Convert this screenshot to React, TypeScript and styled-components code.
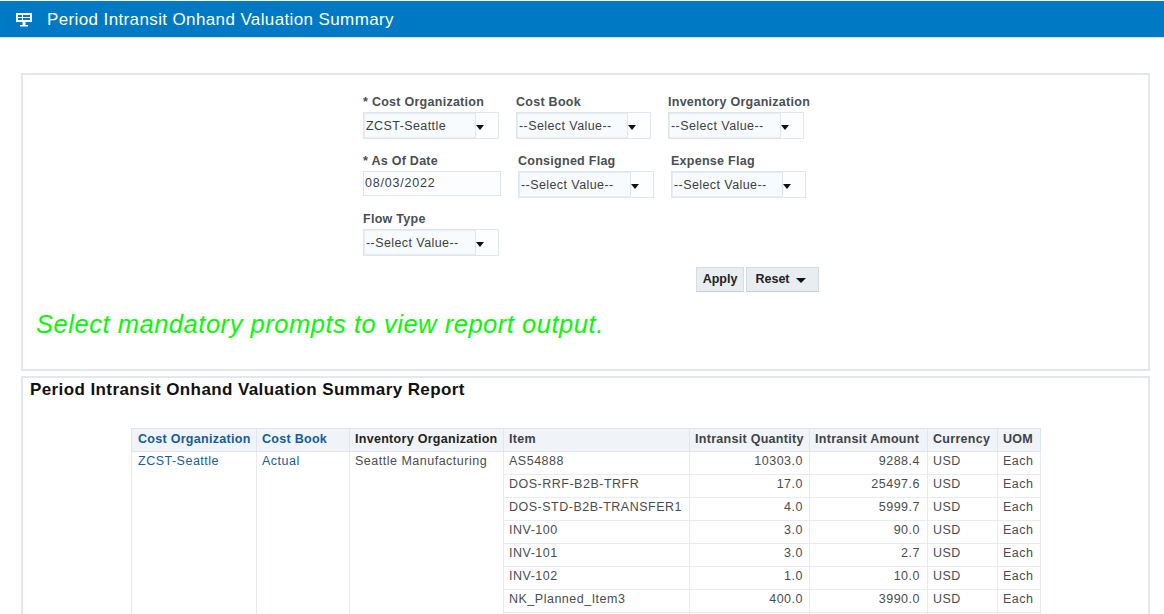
import React from "react";
import styled, { createGlobalStyle } from "styled-components";

const GlobalStyle = createGlobalStyle`
  html, body {
    margin: 0;
    padding: 0;
    height: 100%;
    overflow: hidden;
    background: #fff;
    font-family: "Liberation Sans", Arial, sans-serif;
  }
`;

const Page = styled.div`
  width: 1164px;
  height: 614px;
  overflow: hidden;
  display: flex;
  flex-direction: column;
`;

const Header = styled.header`
  margin-top: 1px;
  height: 36px;
  flex: none;
  background: #0079c5;
  border-bottom: 1px solid #cfe2f0;
  display: flex;
  align-items: center;
  padding-left: 15px;
  gap: 12px;
  color: #fff;
`;

const HeaderTitle = styled.h1`
  margin: 0;
  padding-top: 2px;
  font-size: 17px;
  font-weight: normal;
  letter-spacing: 0.38px;
`;

const Panel = styled.section<{ $height: number }>`
  box-sizing: border-box;
  margin: 0 14px 0 21px;
  height: ${(p) => p.$height}px;
  flex: none;
  border: 2px solid #e3e8f0;
  background: #fff;
`;

const PromptPanel = styled(Panel)`
  margin-top: 35px;
  padding: 20px 0 0 13px;
  margin-bottom: 5px;
`;

const PromptRow = styled.div`
  display: flex;
  gap: 17px;
  margin-left: 327px;
  height: 58.5px;
`;

const Prompt = styled.div`
  display: flex;
  flex-direction: column;
`;

const PromptLabel = styled.label`
  font-size: 12.5px;
  font-weight: bold;
  color: #4a4f52;
  line-height: 15px;
  height: 17px;
  letter-spacing: 0.27px;
  white-space: nowrap;
`;

const SelectBox = styled.div<{ $width: number }>`
  box-sizing: border-box;
  width: ${(p) => p.$width}px;
  height: 27px;
  border: 1px solid #dfe6ec;
  display: flex;
  background: #fdfeff;
`;

const SelectValue = styled.div`
  box-sizing: border-box;
  flex: 1;
  border: 1px solid #e6ecf2;
  border-right-color: #dfe6ec;
  background: #f8fbfe;
  font-size: 12.5px;
  line-height: 24px;
  padding-left: 1px;
  color: #3c3f41;
  white-space: nowrap;
  letter-spacing: 0.42px;
`;

const SelectArrow = styled.div`
  flex: none;
  width: 22px;
  display: flex;
  align-items: center;
  justify-content: flex-start;
  padding-top: 4px;
  box-sizing: border-box;
  &::after {
    content: "";
    border-left: 4.5px solid transparent;
    border-right: 4.5px solid transparent;
    border-top: 5px solid #111;
  }
`;

const DateBox = styled.div`
  box-sizing: border-box;
  width: 138px;
  height: 25px;
  border: 1px solid #dfe6ec;
  background: #fbfdfe;
  font-size: 12.5px;
  line-height: 22px;
  padding-left: 1px;
  color: #3c3f41;
  letter-spacing: 0.8px;
`;

const Actions = styled.div`
  display: flex;
  gap: 2px;
  margin: -4px 0 0 660px;
`;

const ActionButton = styled.button`
  box-sizing: border-box;
  height: 25px;
  width: 48px;
  padding: 0 6px;
  display: flex;
  align-items: center;
  justify-content: center;
  gap: 5px;
  border: 1px solid #d6dde3;
  border-bottom-color: #c6ced5;
  background: #e8edf2;
  font-family: inherit;
  font-size: 12.5px;
  font-weight: bold;
  color: #222;
  &[value="menu"] {
    width: 73px;
    gap: 6px;
    padding-right: 10px;
  }
  &[value="menu"]::after {
    content: "";
    border-left: 5px solid transparent;
    border-right: 5px solid transparent;
    border-top: 5px solid #111;
    margin-top: 2px;
  }
`;

const Notice = styled.p`
  margin: 19px 0 0 0;
  font-size: 25.5px;
  font-style: italic;
  line-height: 26px;
  color: #08f808;
  letter-spacing: 0.53px;
  white-space: nowrap;
`;

const ReportTitle = styled.h2`
  margin: 2px 0 0 7px;
  font-size: 17px;
  line-height: 20px;
  font-weight: bold;
  color: #111;
  letter-spacing: 0.4px;
`;

const Table = styled.table`
  border-collapse: collapse;
  table-layout: fixed;
  width: 909px;
  margin: 28px 0 0 108px;
  font-size: 12.5px;
  color: #4a4d50;
  letter-spacing: 0.5px;
`;

const Th = styled.th<{ $link?: boolean; $dark?: boolean }>`
  box-sizing: border-box;
  height: 23px;
  padding: 0 5px 2px;
  background: #f0f3f7;
  border: 1px solid #dfe6ee;
  text-align: left;
  white-space: nowrap;
  font-weight: bold;
  letter-spacing: 0.29px;
  color: ${(p) => (p.$link ? "#145c9e" : p.$dark ? "#222" : "#3f4347")};
`;

const OrgTh = styled(Th)`
  padding-left: 6px;
`;

const Td = styled.td<{ $link?: boolean }>`
  box-sizing: border-box;
  height: 23px;
  padding: 0 5px 4px;
  border: 1px solid #e6ecf2;
  white-space: nowrap;
  vertical-align: middle;
  color: ${(p) => (p.$link ? "#145c9e" : "inherit")};
`;

const QuantityTd = styled(Td)`
  text-align: right;
  padding-right: 6px;
`;

const AmountTd = styled(Td)`
  text-align: right;
  padding-right: 7px;
`;

const SpanTd = styled(Td)`
  vertical-align: top;
  padding-top: 2px;
`;

const OrgTd = styled(SpanTd)`
  padding-left: 6px;
`;

const DashIcon = () => (
  <svg width="20" height="16" viewBox="0 0 20 16" fill="none">
    <path fillRule="evenodd" fill="#fff" d="M1 2h16v9H1zM3 4v2h4V4zM8 4v2h7V4zM3 7v2h4V7zM8 7v2h7V7z" />
    <path fill="#fff" d="M7.5 11h3v3h2.5v1.5H5V14h2.5z" />
  </svg>
);

const Select = ({ width, value = "--Select Value--" }: { width: number; value?: string }) => (
  <SelectBox $width={width}>
    <SelectValue>{value}</SelectValue>
    <SelectArrow />
  </SelectBox>
);

const items = [
  ["AS54888", "10303.0", "9288.4"],
  ["DOS-RRF-B2B-TRFR", "17.0", "25497.6"],
  ["DOS-STD-B2B-TRANSFER1", "4.0", "5999.7"],
  ["INV-100", "3.0", "90.0"],
  ["INV-101", "3.0", "2.7"],
  ["INV-102", "1.0", "10.0"],
  ["NK_Planned_Item3", "400.0", "3990.0"],
  ["", "", ""],
];

const colWidths = [125, 93, 154, 186, 120, 118, 70, 43];

export default function App() {
  return (
    <Page>
      <GlobalStyle />
      <Header>
        <DashIcon />
        <HeaderTitle>Period Intransit Onhand Valuation Summary</HeaderTitle>
      </Header>

      <PromptPanel $height={298}>
        <PromptRow>
          <Prompt>
            <PromptLabel>* Cost Organization</PromptLabel>
            <Select width={136} value="ZCST-Seattle" />
          </Prompt>
          <Prompt>
            <PromptLabel>Cost Book</PromptLabel>
            <Select width={135} />
          </Prompt>
          <Prompt>
            <PromptLabel>Inventory Organization</PromptLabel>
            <Select width={136} />
          </Prompt>
        </PromptRow>
        <PromptRow>
          <Prompt>
            <PromptLabel>* As Of Date</PromptLabel>
            <DateBox>08/03/2022</DateBox>
          </Prompt>
          <Prompt>
            <PromptLabel>Consigned Flag</PromptLabel>
            <Select width={136} />
          </Prompt>
          <Prompt>
            <PromptLabel>Expense Flag</PromptLabel>
            <Select width={135} />
          </Prompt>
        </PromptRow>
        <PromptRow>
          <Prompt>
            <PromptLabel>Flow Type</PromptLabel>
            <Select width={136} />
          </Prompt>
        </PromptRow>
        <Actions>
          <ActionButton>Apply</ActionButton>
          <ActionButton value="menu">Reset</ActionButton>
        </Actions>
        <Notice>Select mandatory prompts to view report output.</Notice>
      </PromptPanel>

      <Panel $height={300}>
        <ReportTitle>Period Intransit Onhand Valuation Summary Report</ReportTitle>
        <Table>
          <colgroup>
            {colWidths.map((w, i) => (
              <col key={i} style={{ width: w }} />
            ))}
          </colgroup>
          <thead>
            <tr>
              <OrgTh $link>Cost Organization</OrgTh>
              <Th $link>Cost Book</Th>
              <Th $dark>Inventory Organization</Th>
              <Th>Item</Th>
              <Th>Intransit Quantity</Th>
              <Th>Intransit Amount</Th>
              <Th>Currency</Th>
              <Th>UOM</Th>
            </tr>
          </thead>
          <tbody>
            {items.map((row, i) => (
              <tr key={i}>
                {i === 0 && (
                  <>
                    <OrgTd rowSpan={items.length} $link>ZCST-Seattle</OrgTd>
                    <SpanTd rowSpan={items.length} $link>Actual</SpanTd>
                    <SpanTd rowSpan={items.length}>Seattle Manufacturing</SpanTd>
                  </>
                )}
                <Td>{row[0]}</Td>
                <QuantityTd>{row[1]}</QuantityTd>
                <AmountTd>{row[2]}</AmountTd>
                <Td>{row[0] && "USD"}</Td>
                <Td>{row[0] && "Each"}</Td>
              </tr>
            ))}
          </tbody>
        </Table>
      </Panel>
    </Page>
  );
}
